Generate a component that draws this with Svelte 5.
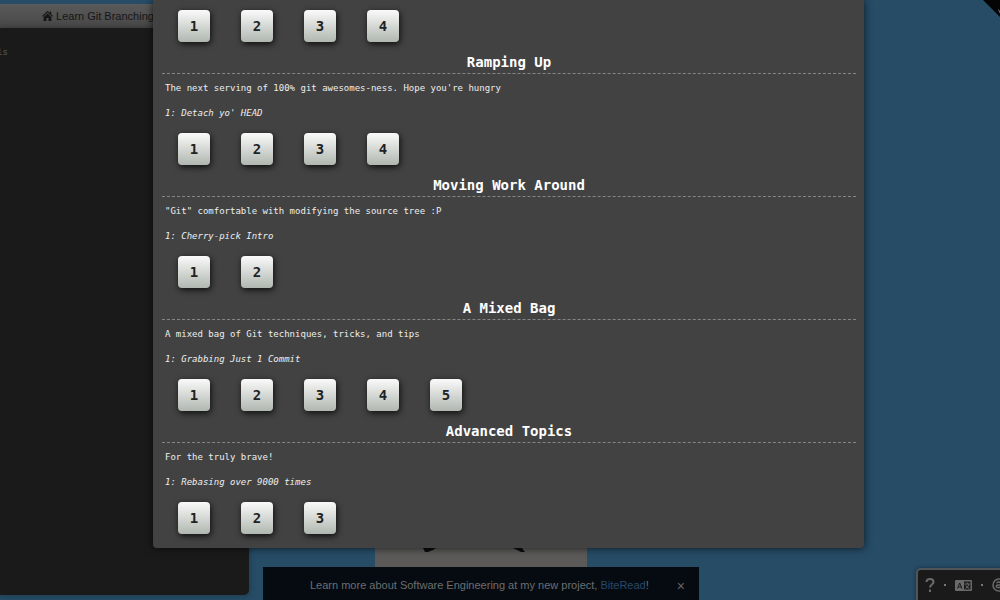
<script>
    const sections = [
        {
            title: 'Ramping Up',
            about: 'The next serving of 100% git awesomes-ness. Hope you\'re hungry',
            current: '1: Detach yo\' HEAD',
            levels: 4
        },
        {
            title: 'Moving Work Around',
            about: '"Git" comfortable with modifying the source tree :P',
            current: '1: Cherry-pick Intro',
            levels: 2
        },
        {
            title: 'A Mixed Bag',
            about: 'A mixed bag of Git techniques, tricks, and tips',
            current: '1: Grabbing Just 1 Commit',
            levels: 5
        },
        {
            title: 'Advanced Topics',
            about: 'For the truly brave!',
            current: '1: Rebasing over 9000 times',
            levels: 3
        }
    ];

    let selected = '';
    let bannerOpen = true;

    function pick(title, level) {
        selected = title + level;
    }

    function closeBanner() {
        bannerOpen = false;
    }
</script>

<style>
    :global(body) {
        overflow: hidden;
        background: #264c66;
    }

    .app {
        position: relative;
        height: 100vh;
        overflow: hidden;

        font-family: 'Liberation Sans', Arial, sans-serif;
    }

    .terminal {
        display: flex;
        flex-flow: column nowrap;
        box-sizing: border-box;
        width: 249px;
        height: 100%;
        padding: 4px 0 5px;
    }

    .title {
        flex: 0 0 24px;
        padding-left: 42px;

        font-size: 11px;
        line-height: 24px;
        white-space: nowrap;
        color: #161616;
        background: linear-gradient(#5a5a5a, #474747);
    }
    .title svg {
        width: 11px;
        height: 10px;
        vertical-align: -1px;
    }

    .output {
        flex: 1 1 auto;
        padding: 16px 0;

        font-family: 'DejaVu Sans Mono', monospace;
        font-size: 9px;
        line-height: 16px;
        color: #5a5a5a;
        background: #1a1a1a;
        border-radius: 0 0 5px 0;
        box-shadow: 0 0 6px rgba(0, 0, 0, 0.3);
    }
    .output p {
        display: flex;
        justify-content: flex-end;
        width: 8px;
        margin: 0;
    }

    .goal {
        position: absolute;
        bottom: 0;
        left: 375px;
        width: 212px;
        height: 54px;

        background: #5b5a58;
    }
    .goal svg {
        display: block;
        width: 100%;
    }

    .modal {
        position: absolute;
        top: 0;
        right: 136px;
        left: 153px;
        padding: 10px 8px 14px 9px;

        font-family: 'DejaVu Sans Mono', monospace;
        color: #eee;
        background: #424242;
        border-radius: 0 0 4px 4px;
        box-shadow: 0 0 8px rgba(0, 0, 0, 0.7);
    }

    h2 {
        box-sizing: border-box;
        height: 24px;
        margin: 8px 0 4px;

        font-size: 14px;
        line-height: 24px;
        text-align: center;
        color: #fff;
        border-bottom: 1px dashed #858585;
    }

    .modal p {
        margin: 0 3px 5px;

        font-size: 9px;
        line-height: 20px;
    }
    .modal .current {
        margin-bottom: 10px;

        font-style: italic;
    }

    .levels {
        display: flex;
        flex-flow: row wrap;
        gap: 31px;
        padding: 0 16px;
    }
    .levels button {
        width: 32px;
        height: 32px;
        padding: 0;

        font-family: inherit;
        font-size: 14px;
        font-weight: bold;
        color: #222;
        background: linear-gradient(#fafafa, #b0b7b0);
        border: 0;
        border-radius: 4px;
        box-shadow: 1px 2px 6px rgba(0, 0, 0, 0.8);
    }
    .levels button.selected {
        background: #c4dbc4;
    }

    .banner {
        position: absolute;
        right: 301px;
        bottom: 0;
        left: 263px;
        display: flex;
        box-sizing: border-box;
        height: 33px;
        padding: 4px 12px 0 47px;

        font-size: 11px;
        line-height: 29px;
        color: #6c6e70;
        background: #060b12;
    }
    .banner p {
        flex: 1 1 auto;
        height: 29px;
        margin: 0;

        white-space: nowrap;
    }
    .banner a {
        color: #28496c;
        text-decoration: none;
    }
    .banner button {
        padding: 0 2px;

        font-family: inherit;
        font-size: 14px;
        color: #666;
        background: none;
        border: 0;
    }

    .toolbar {
        position: absolute;
        right: -60px;
        bottom: -6px;
        display: flex;
        align-items: center;
        gap: 9px;
        box-sizing: border-box;
        width: 144px;
        height: 38px;
        padding: 0 7px 4px;

        color: #6a6a6a;
        background: #1a1a1a;
        border: 2px solid #505658;
        border-radius: 5px;
        box-shadow: 0 0 4px rgba(0, 0, 0, 0.4);
    }
    .toolbar button {
        display: flex;
        padding: 0;

        color: inherit;
        background: none;
        border: 0;
    }
    .toolbar i {
        width: 2px;
        height: 2px;

        background: #777;
    }

    .ribbon {
        position: absolute;
        top: 0;
        right: 0;
        width: 17px;
        height: 17px;
    }
</style>

<div class="app">
    <div class="terminal">
        <div class="title">
            <svg viewBox="0 0 11 10" aria-hidden="true">
                <path d="M5.5 0 0 5l.8.8L5.5 1.6l4.700 4.200.8-.8-1.800-1.700V.6H7.700v1.400z M5.5 2.500 1.600 6v4h2.900V7h2v3h2.900V6z" fill="currentColor" />
            </svg>
            Learn Git Branching
        </div>
        <div class="output"><p>levels</p></div>
    </div>

    <div class="goal">
        <svg viewBox="0 0 212 20" aria-hidden="true">
            <path d="M48 2h13l-3 2-5 2-3 0-1-2z M138 2h9l3 4-4 0-4-2z" fill="#0c0c0c" />
        </svg>
    </div>

    {#if bannerOpen}
        <div class="banner">
            <p>Learn more about Software Engineering at my new project, <a href="#biteread">BiteRead</a>!</p>
            <button aria-label="Close" on:click={closeBanner}>×</button>
        </div>
    {/if}

    <div class="toolbar">
        <button aria-label="Help">
            <svg width="10" height="14" viewBox="0 0 10 14" fill="none" stroke="currentColor" stroke-width="2">
                <path d="M1.500 4C1.500 0 8.500 0 8.500 4c0 2.500-3.500 2.500-3.500 5.500M5 11.500V14" />
            </svg>
        </button>
        <i></i>
        <button aria-label="Language">
            <svg width="17" height="11" viewBox="0 0 17 11">
                <rect width="17" height="11" rx="1" fill="currentColor" />
                <path d="M9 1.500h6.500v8H9z" fill="#1a1a1a" />
                <path d="M2.500 8.500 4.700 3l2.200 5.500M3.300 7h2.800" fill="none" stroke="#1a1a1a" />
                <path d="M9.500 4h5.500M12.300 2.500V4M10.500 8.500q3-1.500 3.500-4.500M10.800 5.500q1 2 3.500 3" fill="none" stroke="currentColor" />
            </svg>
        </button>
        <i></i>
        <button aria-label="Profile">
            <svg width="14" height="14" viewBox="0 0 14 14" fill="none" stroke="currentColor" stroke-width="1.500">
                <circle cx="7" cy="7" r="6" />
                <path d="M4.500 5q2.500-2 4.500 0v4.500M9 7H6q-2 0-1.500 2 2 1.500 4.500-.5" />
            </svg>
        </button>
    </div>

    <svg class="ribbon" viewBox="0 0 17 17" aria-hidden="true">
        <path d="M0 0h17v17z" fill="#050505" />
        <path d="M15.500 9.500 17 13" stroke="#777" />
    </svg>

    <div class="modal">
        <div class="levels">
            {#each [1, 2, 3, 4] as level}
                <button class:selected={selected === 'intro' + level} on:click={() => {pick('intro', level)}}>{level}</button>
            {/each}
        </div>

        {#each sections as section}
            <h2>{section.title}</h2>
            <p>{section.about}</p>
            <p class="current">{section.current}</p>
            <div class="levels">
                {#each Array(section.levels) as _, i}
                    <button class:selected={selected === section.title + (i + 1)} on:click={() => {pick(section.title, i + 1)}}>{i + 1}</button>
                {/each}
            </div>
        {/each}
    </div>
</div>
